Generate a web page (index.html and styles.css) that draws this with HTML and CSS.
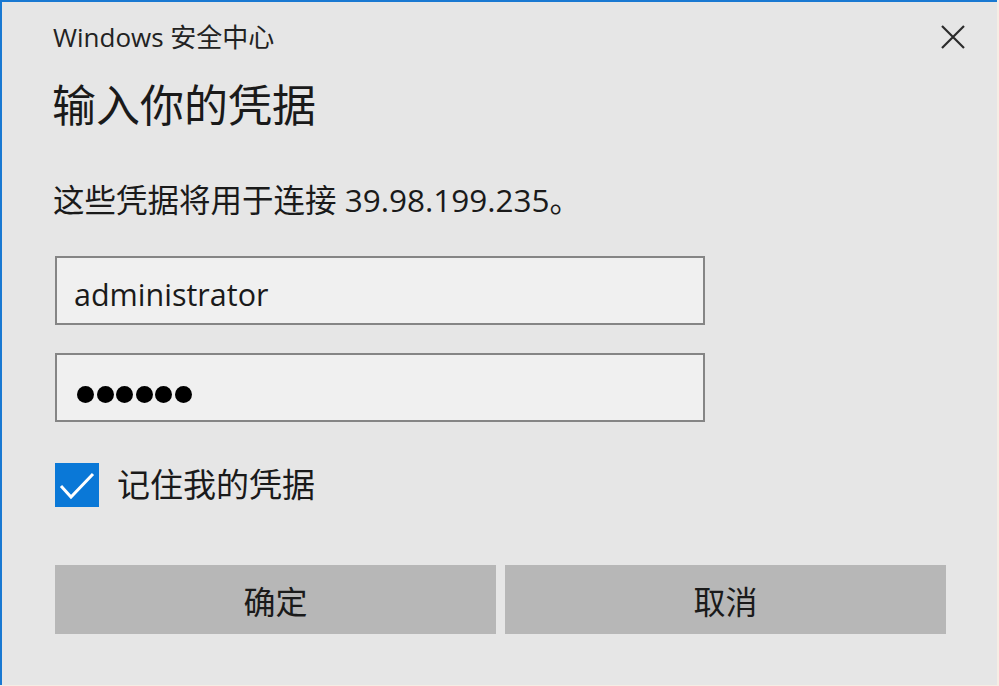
FILE: index.html
```html
<!DOCTYPE html>
<html lang="zh-CN">
<head>
<meta charset="utf-8">
<title>Windows 安全中心</title>
<link rel="stylesheet" href="styles.css">
</head>
<body>
<div class="window">
  <div class="titlebar">
    <div class="app-title">Windows 安全中心</div>
    <button class="close" aria-label="关闭">
      <svg width="24" height="24" viewBox="0 0 24 24"><path d="M1 1 L23 23 M23 1 L1 23" stroke="#2b2b2b" stroke-width="2.2" fill="none"/></svg>
    </button>
  </div>
  <h1 class="heading">输入你的凭据</h1>
  <p class="desc">这些凭据将用于连接 39.98.199.235。</p>
  <div class="field">administrator</div>
  <div class="field field-pass">
    <span class="dot"></span><span class="dot"></span><span class="dot"></span><span class="dot"></span><span class="dot"></span><span class="dot"></span>
  </div>
  <label class="remember">
    <span class="checkbox">
      <svg width="44" height="44" viewBox="0 0 44 44"><polyline points="6,23 16,34 38,11" stroke="#fff" stroke-width="3" fill="none"/></svg>
    </span>
    <span class="remember-text">记住我的凭据</span>
  </label>
  <div class="buttons">
    <button class="btn">确定</button>
    <button class="btn">取消</button>
  </div>
</div>
</body>
</html>
```

FILE: styles.css
```css
html, body {
  margin: 0;
  padding: 0;
}
body {
  background: #f6ede4;
  width: 999px;
  height: 686px;
  overflow: hidden;
  font-family: "Open Sans", "Noto Sans CJK SC", sans-serif;
  color: #1a1a1a;
}
.window {
  box-sizing: border-box;
  width: 997px;
  height: 685px;
  background: #e6e6e6;
  border-top: 2px solid #1979d2;
  border-left: 2px solid #1979d2;
  padding: 17px 0 0 52px;
}
.titlebar {
  display: flex;
  justify-content: space-between;
  align-items: center;
  width: 911px;
  height: 36px;
}
.app-title {
  font-size: 26px;
  line-height: 36px;
  color: #222;
  margin-left: -1px;
}
.close {
  border: 0;
  background: none;
  padding: 0;
  width: 24px;
  height: 24px;
  display: flex;
  margin-top: -1px;
}
.heading {
  margin: 20px 0 0 -2px;
  font-size: 44px;
  line-height: 60px;
  font-weight: normal;
  color: #1a1a1a;
}
.desc {
  margin: 43px 0 0 -1px;
  font-size: 31.5px;
  line-height: 44px;
}
.field {
  box-sizing: border-box;
  width: 650px;
  height: 69px;
  margin-top: 34px;
  margin-left: 1px;
  background: #f0f0f0;
  border: 2px solid #858585;
  padding: 9px 0 0 17px;
  font-size: 30.5px;
  line-height: 54px;
  color: #1a1a1a;
}
.field-pass {
  margin-top: 28px;
  display: flex;
  align-items: center;
  gap: 2.6px;
  padding: 14px 0 0 20px;
}
.dot {
  width: 17px;
  height: 17px;
  border-radius: 50%;
  background: #000;
}
.remember {
  display: flex;
  align-items: center;
  gap: 18px;
  margin-top: 41px;
  margin-left: 1px;
}
.checkbox {
  width: 44px;
  height: 44px;
  background: #0a78d7;
  display: flex;
}
.remember-text {
  font-size: 33px;
  line-height: 44px;
}
.buttons {
  display: flex;
  gap: 9px;
  margin-top: 58px;
  margin-left: 1px;
}
.btn {
  width: 441px;
  height: 69px;
  border: 0;
  background: #b7b7b7;
  font-family: "Open Sans", "Noto Sans CJK SC", sans-serif;
  font-size: 32px;
  color: #1a1a1a;
  padding: 0;
}
```
